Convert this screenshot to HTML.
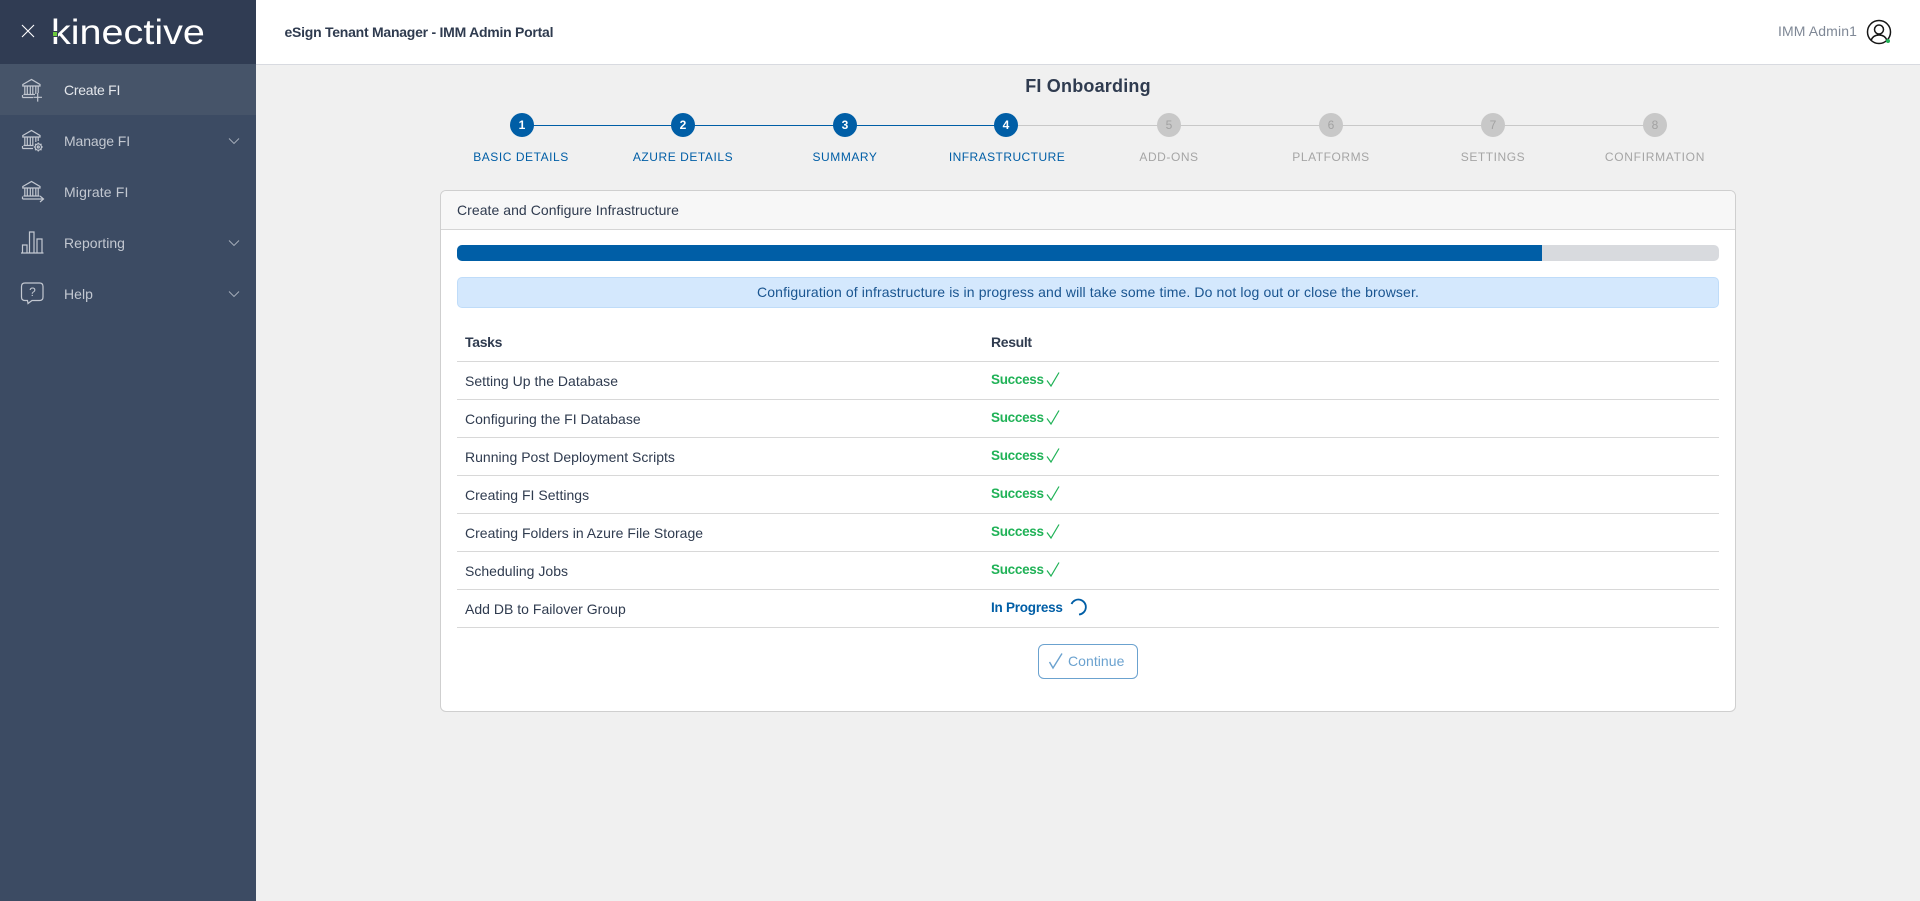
<!DOCTYPE html>
<html lang="en">
<head>
<meta charset="utf-8">
<title>FI Onboarding</title>
<style>
*{box-sizing:border-box}
html,body{margin:0;padding:0;width:1920px;height:901px;overflow:hidden;background:#f0f0f0;font-family:"Liberation Sans",sans-serif;color:#2f3b4f;font-size:14px}
.a{position:absolute;white-space:nowrap}
#side{position:absolute;left:0;top:0;width:256px;height:901px;background:#3c4b63}
#sidetop{position:absolute;left:0;top:0;width:256px;height:64px;background:#303c53}
#active{position:absolute;left:0;top:64px;width:256px;height:51px;background:#465469}
.nav{position:absolute;left:64px;font-size:14px;line-height:20px;color:#c3c8d1;letter-spacing:.03px}
.ic{position:absolute;fill:none;stroke:#c3c8d1;stroke-width:1.2}
.chev{position:absolute;left:227px;fill:none;stroke:#a9b1bd;stroke-width:.9}
#bar{position:absolute;left:256px;top:0;width:1664px;height:65px;background:#fff;border-bottom:1px solid #d8dae0}
.circle{position:absolute;top:113px;width:24px;height:24px;border-radius:50%;text-align:center;font-size:12px;line-height:24px;font-weight:bold;background:#005ea6;color:#fff}
.circle.off{background:#c8c8c8;color:#a2a2a2;font-weight:normal}
.lbl{position:absolute;top:149px;width:160px;text-align:center;font-size:12px;line-height:16px;letter-spacing:.55px;color:#005ea6}
.lbl.off{color:#a5a5a5}
.line{position:absolute;top:125px;height:1px}
#card{position:absolute;left:440px;top:190px;width:1296px;height:522px;background:#fff;border:1px solid #cfcfcf;border-radius:6px}
#cardh{position:absolute;left:0;top:0;width:1294px;height:39px;background:#f7f7f7;border-bottom:1px solid #d5d5d5;border-radius:5px 5px 0 0;padding-left:16px;line-height:38px;letter-spacing:.05px}
.hr{position:absolute;left:457px;width:1262px;height:1px;background:#d8d8d8}
.task{position:absolute;left:465px;line-height:20px;letter-spacing:.02px;white-space:nowrap}
.ok{position:absolute;left:991px;line-height:20px;font-weight:bold;color:#20b257;font-size:13.5px;letter-spacing:-.3px}
.chk{position:absolute;left:1046px;fill:none;stroke:#20b257;stroke-width:1.2}
</style>
</head>
<body>
<div id="side">
  <div id="sidetop"></div>
  <div id="active"></div>
  <svg class="a" style="left:20px;top:23px" width="16" height="16" viewBox="0 0 16 16" fill="none" stroke="#fff" stroke-width="1.1"><path d="M2 2L14 14M14 2L2 14"/></svg>
  <div class="a" style="left:50.500px;top:11px;font-size:35px;line-height:44px;color:#fff;transform-origin:0 0;transform:scaleX(1.13)">kinective</div>
  <div class="a" style="left:52px;top:31px;width:5.500px;height:6px;background:#303c53"></div>
  <div class="a" style="left:53px;top:32px;width:4px;height:4px;background:#6cc83c"></div>

  <svg class="ic" style="left:20px;top:76px" width="26" height="26" viewBox="0 0 26 26"><path d="M2.800 8.500L11.500 3.500L20 8.500V10H2.800ZM4.800 10.500V18M7.300 10.500V18M10.300 10.500V18M12.800 10.500V18M15.800 10.500V18M18.200 10.500V17M3.500 18.500H15M2.500 21.500H13M2.500 21.500V19M17.700 17V25.600M13.400 21.300H22"/></svg>
  <div class="nav" style="top:80px;color:#e4e7ec;letter-spacing:-.25px">Create FI</div>

  <svg class="ic" style="left:20px;top:127px" width="26" height="26" viewBox="0 0 26 26"><path d="M2.800 8.500L11.500 3.500L20 8.500V10H2.800ZM4.800 10.500V18M7.300 10.500V18M10.300 10.500V18M12.800 10.500V18M15.800 10.500V15M18.200 10.500V14M3.500 18.500H13.500M2.500 21.500H13M2.500 21.500V19"/><circle cx="18.300" cy="20" r="3.200"/><circle cx="18.300" cy="20" r="1"/><path d="M18.300 15.500v1.200M18.300 23.300v1.200M13.800 20h1.200M21.600 20h1.200M15.100 16.800l.9.9M20.600 22.300l.9.9M21.500 16.800l-.9.9M16 22.300l-.9.9"/></svg>
  <div class="nav" style="top:131px;letter-spacing:-.1px">Manage FI</div>
  <svg class="chev" style="top:136px" width="14" height="10" viewBox="0 0 14 10"><path d="M2 2.500L7 7.500L12 2.500"/></svg>

  <svg class="ic" style="left:20px;top:178px" width="26" height="26" viewBox="0 0 26 26"><path d="M2.800 8.500L11.500 3.500L20 8.500V10H2.800ZM4.800 10.500V17.500M7.300 10.500V17.500M10.300 10.500V17.500M12.800 10.500V17.500M15.800 10.500V17.500M18.200 10.500V17.500M3.500 18H19.500M2.500 21H23M2.500 21V18.500M20 18L23.500 21L20 24"/></svg>
  <div class="nav" style="top:182px;letter-spacing:.15px">Migrate FI</div>

  <svg class="ic" style="left:20px;top:229px" width="26" height="26" viewBox="0 0 26 26"><path d="M1 24H23.500M2.500 24V16H7V24M9.500 24V3H14V24M17 24V10H22V24"/></svg>
  <div class="nav" style="top:233px">Reporting</div>
  <svg class="chev" style="top:238px" width="14" height="10" viewBox="0 0 14 10"><path d="M2 2.500L7 7.500L12 2.500"/></svg>

  <svg class="ic" style="left:20px;top:281px" width="26" height="26" viewBox="0 0 26 26"><path d="M5 2H19.500Q23 2 23 5.500V16Q23 19.500 19.500 19.500H12L8 22.500L7.500 19.500H5Q1.500 19.500 1.500 16V5.500Q1.500 2 5 2Z"/></svg>
  <div class="a" style="left:28px;top:284px;font-size:12px;line-height:16px;color:#c3c8d1;width:9px;text-align:center">?</div>
  <div class="nav" style="top:284px">Help</div>
  <svg class="chev" style="top:289px" width="14" height="10" viewBox="0 0 14 10"><path d="M2 2.500L7 7.500L12 2.500"/></svg>
</div>

<div id="bar"></div>
<div class="a" style="left:284.500px;top:22px;line-height:20px;font-size:14px;font-weight:bold;color:#2f3b4f;letter-spacing:-.25px">eSign Tenant Manager - IMM Admin Portal</div>
<div class="a" style="left:1778px;top:21px;line-height:20px;color:#7f8896;letter-spacing:.12px">IMM Admin1</div>
<svg class="a" style="left:1865px;top:19px" width="28" height="28" viewBox="0 0 28 28" fill="none" stroke="#161616" stroke-width="1.5"><circle cx="14" cy="13" r="11.500"/><circle cx="14" cy="10.500" r="4.500"/><path d="M6 21.500Q8 16 14 16Q20 16 22 21.500"/><circle cx="23" cy="22" r="2" fill="#20b257" stroke="none"/></svg>

<div class="a" style="left:840px;width:496px;top:74px;text-align:center;font-size:18px;line-height:24px;font-weight:bold;color:#2f3b4f;letter-spacing:.2px">FI Onboarding</div>

<div class="line" style="left:522px;width:484px;background:#005ea6"></div>
<div class="line" style="left:1006px;width:650px;background:#c8c8c8"></div>
<div class="circle" style="left:510px">1</div>
<div class="circle" style="left:671px">2</div>
<div class="circle" style="left:833px">3</div>
<div class="circle" style="left:994px">4</div>
<div class="circle off" style="left:1157px">5</div>
<div class="circle off" style="left:1319px">6</div>
<div class="circle off" style="left:1481px">7</div>
<div class="circle off" style="left:1643px">8</div>
<div class="lbl" style="left:441px">BASIC DETAILS</div>
<div class="lbl" style="left:603px">AZURE DETAILS</div>
<div class="lbl" style="left:765px">SUMMARY</div>
<div class="lbl" style="left:927px;letter-spacing:.45px">INFRASTRUCTURE</div>
<div class="lbl off" style="left:1089px">ADD-ONS</div>
<div class="lbl off" style="left:1251px">PLATFORMS</div>
<div class="lbl off" style="left:1413px">SETTINGS</div>
<div class="lbl off" style="left:1575px;letter-spacing:.7px">CONFIRMATION</div>

<div id="card"><div id="cardh">Create and Configure Infrastructure</div></div>

<div class="a" style="left:457px;top:245px;width:1262px;height:16px;background:#d8dade;border-radius:5px;overflow:hidden"><div style="width:1085px;height:16px;background:#005ea6"></div></div>
<div class="a" style="left:457px;top:277px;width:1262px;height:31px;background:#d4e8fd;border:1px solid #bfdcf9;border-radius:5px;text-align:center;line-height:29px;color:#1a5590;letter-spacing:.12px">Configuration of infrastructure is in progress and will take some time. Do not log out or close the browser.</div>

<div class="a" style="left:465px;top:332px;line-height:20px;font-weight:bold;letter-spacing:-.3px">Tasks</div>
<div class="a" style="left:991px;top:332px;line-height:20px;font-weight:bold;letter-spacing:-.35px">Result</div>

<div class="hr" style="top:361px"></div>
<div class="hr" style="top:399px"></div>
<div class="hr" style="top:437px"></div>
<div class="hr" style="top:475px"></div>
<div class="hr" style="top:513px"></div>
<div class="hr" style="top:551px"></div>
<div class="hr" style="top:589px"></div>
<div class="hr" style="top:627px"></div>

<div class="task" style="top:371px">Setting Up the Database</div>
<div class="task" style="top:409px">Configuring the FI Database</div>
<div class="task" style="top:447px">Running Post Deployment Scripts</div>
<div class="task" style="top:485px">Creating FI Settings</div>
<div class="task" style="top:523px">Creating Folders in Azure File Storage</div>
<div class="task" style="top:561px">Scheduling Jobs</div>
<div class="task" style="top:599px">Add DB to Failover Group</div>

<div class="ok" style="top:370px">Success</div>
<div class="ok" style="top:408px">Success</div>
<div class="ok" style="top:446px">Success</div>
<div class="ok" style="top:484px">Success</div>
<div class="ok" style="top:522px">Success</div>
<div class="ok" style="top:560px">Success</div>
<svg class="chk" style="top:371px" width="16" height="18" viewBox="0 0 16 18"><path d="M1 9.500L5 15L13 1.500"/></svg>
<svg class="chk" style="top:409px" width="16" height="18" viewBox="0 0 16 18"><path d="M1 9.500L5 15L13 1.500"/></svg>
<svg class="chk" style="top:447px" width="16" height="18" viewBox="0 0 16 18"><path d="M1 9.500L5 15L13 1.500"/></svg>
<svg class="chk" style="top:485px" width="16" height="18" viewBox="0 0 16 18"><path d="M1 9.500L5 15L13 1.500"/></svg>
<svg class="chk" style="top:523px" width="16" height="18" viewBox="0 0 16 18"><path d="M1 9.500L5 15L13 1.500"/></svg>
<svg class="chk" style="top:561px" width="16" height="18" viewBox="0 0 16 18"><path d="M1 9.500L5 15L13 1.500"/></svg>

<div class="a" style="left:991px;top:598px;line-height:20px;font-weight:bold;color:#005ea6;font-size:13.5px;letter-spacing:-.24px">In Progress</div>
<svg class="a" style="left:1069px;top:598px" width="18" height="18" viewBox="0 0 18 18" fill="none" stroke="#005ea6" stroke-width="1.8"><path d="M2.500 6A7.500 7.500 0 1 1 10 16.500"/></svg>

<div class="a" style="left:1038px;top:644px;width:100px;height:35px;border:1px solid #6ba2cf;border-radius:6px;background:#fff"></div>
<svg class="a" style="left:1048px;top:652px;fill:none;stroke:#6ba2cf;stroke-width:1.4" width="16" height="18" viewBox="0 0 16 18"><path d="M1.500 10L5 16L14 1.500"/></svg>
<div class="a" style="left:1068px;top:651px;line-height:20px;color:#6ba2cf;letter-spacing:.05px">Continue</div>
</body>
</html>
